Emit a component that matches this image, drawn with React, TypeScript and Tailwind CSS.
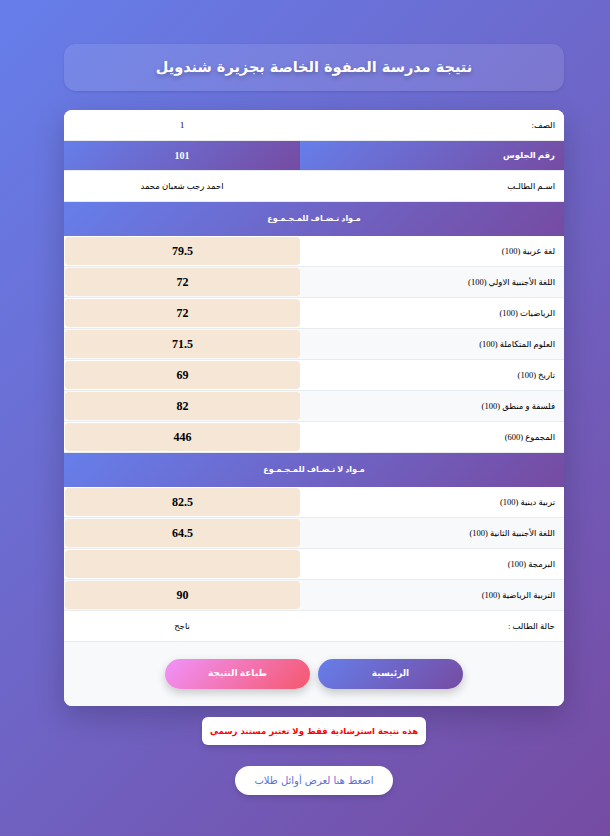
import React from "react";

const grad = "bg-[linear-gradient(135deg,#667eea_0%,#764ba2_100%)]";

type Row = { label: string; value: string };

const added: Row[] = [
  { label: "لغة عربية (100)", value: "79.5" },
  { label: "اللغة الأجنبية الاولي (100)", value: "72" },
  { label: "الرياضيات (100)", value: "72" },
  { label: "العلوم المتكاملة (100)", value: "71.5" },
  { label: "تاريخ (100)", value: "69" },
  { label: "فلسفة و منطق (100)", value: "82" },
  { label: "المجموع (600)", value: "446" },
];

const notAdded: Row[] = [
  { label: "تربية دينية (100)", value: "82.5" },
  { label: "اللغة الأجنبية الثانية (100)", value: "64.5" },
  { label: "البرمجة (100)", value: "" },
  { label: "التربية الرياضية (100)", value: "90" },
];

function InfoRow({ label, value }: { label: string; value: string }) {
  return (
    <div className="flex h-[31px] border-b border-[#e9ecef] bg-white">
      <div className="flex w-[264px] items-center px-[9px] text-[8.5px] text-black">{label}</div>
      <div className="flex flex-1 items-center justify-center pt-px text-[8.5px] text-black">{value}</div>
    </div>
  );
}

function SubjectRow({ row, i }: { row: Row; i: number }) {
  return (
    <div className={`flex h-[31px] border-b border-[#e9ecef] ${i % 2 ? "bg-[#f8f9fa]" : "bg-white"}`}>
      <div className="flex w-[264px] items-center px-[9px] text-[8.5px] text-black">{row.label}</div>
      <div className="flex flex-1 p-px pr-0">
        <div className="flex flex-1 items-center justify-center rounded-[4px] bg-[#f5e6d6] text-[12px] font-bold text-black">
          {row.value}
        </div>
      </div>
    </div>
  );
}

function Section({ title }: { title: string }) {
  return (
    <div className={`flex h-[34px] items-center justify-center text-[8px] font-bold text-white ${grad}`}>
      {title}
    </div>
  );
}

export default function App() {
  return (
    <div
      dir="rtl"
      className={`min-h-screen ${grad} flex flex-col items-center pb-10 pl-[18px] pt-[44px] [font-family:'Liberation_Serif','DejaVu_Sans',serif]`}
    >
      <div className="flex h-[47px] w-[500px] items-center justify-center rounded-xl bg-white/10 shadow-sm">
        <h1 className="text-[14.5px] font-bold text-white [font-family:'DejaVu_Sans',sans-serif] [text-shadow:0_2px_4px_rgba(0,0,0,0.25)]">
          نتيجة مدرسة الصفوة الخاصة بجزيرة شندويل
        </h1>
      </div>

      <div className="mt-[19px] w-[500px] overflow-hidden rounded-lg bg-white shadow-[0_10px_30px_rgba(0,0,0,0.2)]">
        <InfoRow label="الصف:" value="1" />
        <div className="flex h-[30px] border-b border-[#e9ecef]">
          <div className={`flex w-[264px] items-center px-[9px] text-[8.5px] font-bold text-white ${grad}`}>
            رقم الجلوس
          </div>
          <div className={`flex flex-1 items-center justify-center text-[10px] font-bold text-white ${grad}`}>101</div>
        </div>
        <InfoRow label="اسـم الطالـب" value="احمد رجب شعبان محمد" />
        <Section title="مـواد تـضـاف للمـجـمـوع" />
        {added.map((r, i) => (
          <SubjectRow key={r.label} row={r} i={i} />
        ))}
        <Section title="مـواد لا تـضـاف للمـجـمـوع" />
        {notAdded.map((r, i) => (
          <SubjectRow key={r.label} row={r} i={i} />
        ))}
        <InfoRow label="حالة الطالب :" value="ناجح" />
        <div className="flex h-[64px] items-center justify-center gap-2 bg-[#f8f9fa]">
          <button
            className={`h-[30px] w-[145px] rounded-full text-[9px] font-bold text-white shadow-[0_4px_10px_rgba(0,0,0,0.2)] ${grad}`}
          >
            الرئيسية
          </button>
          <button className="h-[30px] w-[145px] rounded-full bg-[linear-gradient(135deg,#f093fb_0%,#f5576c_100%)] text-[9px] font-bold text-white shadow-[0_4px_10px_rgba(0,0,0,0.2)]">
            طباعة النتيجة
          </button>
        </div>
      </div>

      <div className="mt-[11px] flex h-[28px] w-[224px] items-center justify-center rounded-md bg-white text-[8.5px] font-bold text-[#f00] shadow-md [font-family:'DejaVu_Sans',sans-serif]">
        هذه نتيجة استرشادية فقط ولا تعتبر مستند رسمي
      </div>

      <button className="mt-[21px] flex h-[29px] w-[158px] items-center justify-center rounded-full bg-white text-[10px] text-[#5b6fd8] shadow-md [font-family:'DejaVu_Sans',sans-serif]">
        اضغط هنا لعرض أوائل طلاب
      </button>
    </div>
  );
}
